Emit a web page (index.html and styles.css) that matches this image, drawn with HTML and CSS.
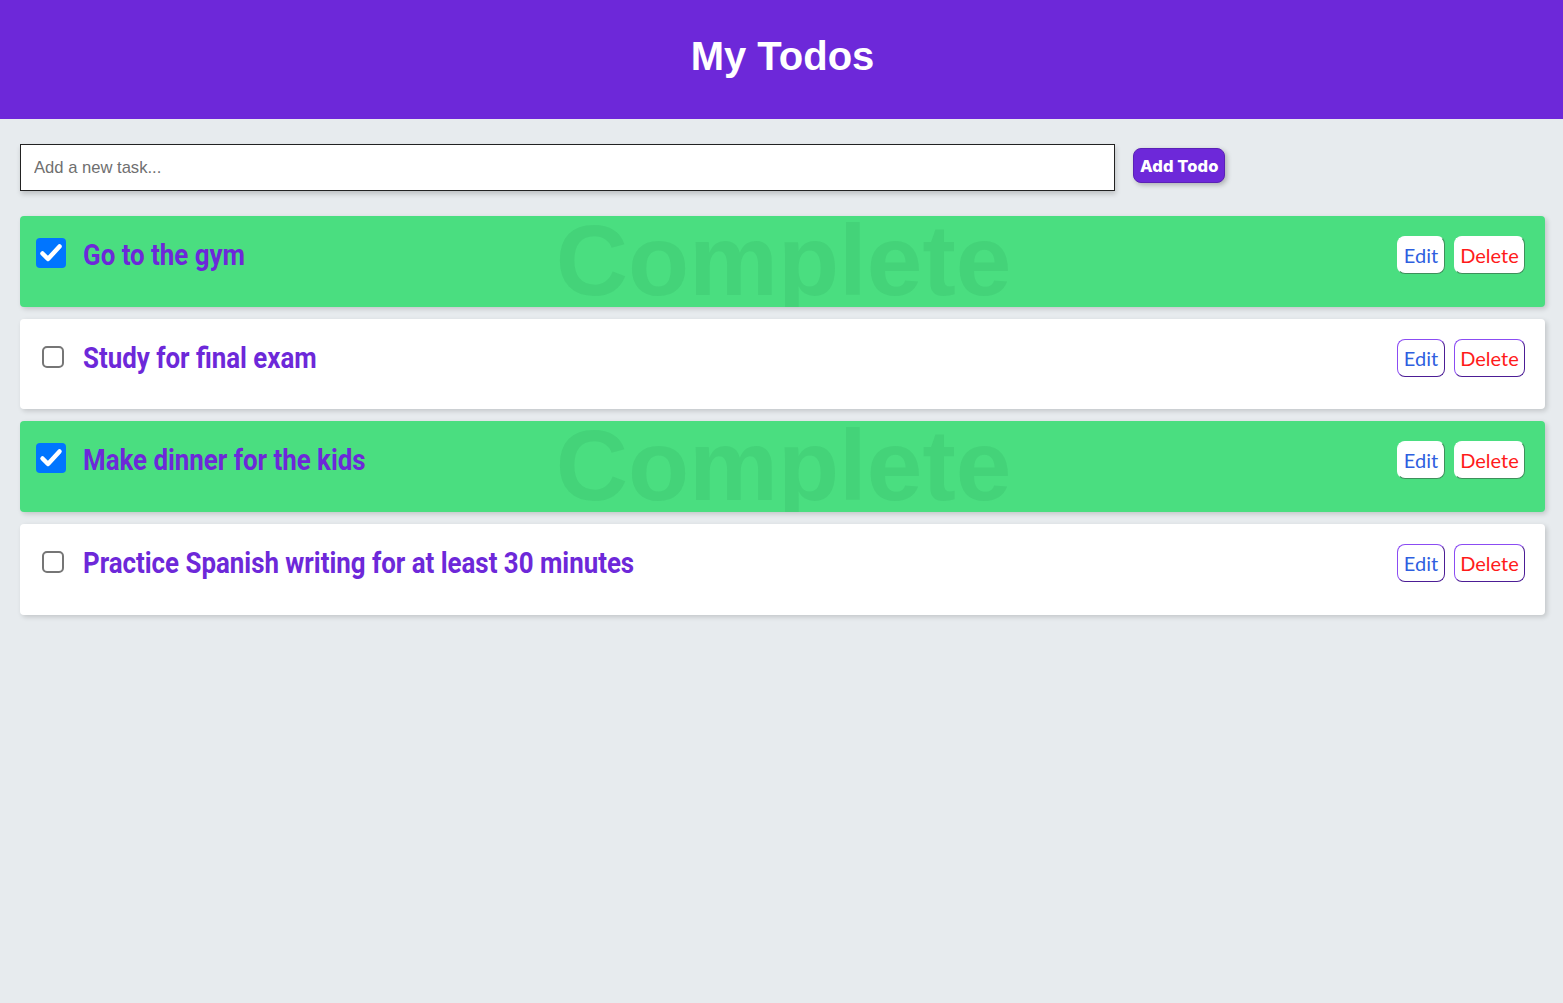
FILE: index.html
```html
<!DOCTYPE html>
<html lang="en">
<head>
<meta charset="utf-8">
<title>My Todos</title>
<link rel="stylesheet" href="styles.css">
</head>
<body>
<header class="topbar">
  <h1 class="title">My Todos</h1>
</header>
<main class="main">
  <form class="add-row">
    <input class="add-input" type="text" placeholder="Add a new task...">
    <button class="add-btn" type="button">Add Todo</button>
  </form>
  <ul class="list">
    <li class="todo done">
      <span class="watermark">Complete</span>
      <span class="check on"><svg viewBox="0 0 30 30" width="30" height="30"><path d="M6.5 15.5 L12 21 L23.5 8.5" fill="none" stroke="#fff" stroke-width="4.5" stroke-linecap="round" stroke-linejoin="round"/></svg></span>
      <span class="todo-body"><span class="todo-text">Go to the gym</span></span>
      <span class="actions"><button class="btn edit">Edit</button><button class="btn del">Delete</button></span>
    </li>
    <li class="todo">
      <span class="check off"></span>
      <span class="todo-body"><span class="todo-text">Study for final exam</span></span>
      <span class="actions"><button class="btn edit">Edit</button><button class="btn del">Delete</button></span>
    </li>
    <li class="todo done">
      <span class="watermark">Complete</span>
      <span class="check on"><svg viewBox="0 0 30 30" width="30" height="30"><path d="M6.5 15.5 L12 21 L23.5 8.5" fill="none" stroke="#fff" stroke-width="4.5" stroke-linecap="round" stroke-linejoin="round"/></svg></span>
      <span class="todo-body"><span class="todo-text">Make dinner for the kids</span></span>
      <span class="actions"><button class="btn edit">Edit</button><button class="btn del">Delete</button></span>
    </li>
    <li class="todo">
      <span class="check off"></span>
      <span class="todo-body"><span class="todo-text">Practice Spanish writing for at least 30 minutes</span></span>
      <span class="actions"><button class="btn edit">Edit</button><button class="btn del">Delete</button></span>
    </li>
  </ul>
</main>
</body>
</html>
```
FILE: styles.css
```css
* { box-sizing: border-box; }
html, body { margin: 0; padding: 0; }
body {
  background: #e7ebee;
  font-family: "Liberation Sans", Arial, sans-serif;
  min-height: 1003px;
}
.topbar {
  background: #6d28d9;
  height: 119px;
  display: flex;
  align-items: center;
  justify-content: center;
}
.title {
  margin: 0;
  color: #fff;
  font-family: "Liberation Sans", Arial, sans-serif;
  font-weight: 700;
  font-size: 40px;
  padding-bottom: 6px;
  padding-left: 2px;
}
.main { padding: 25px 18px 0 20px; }
.add-row {
  display: flex;
  align-items: center;
  gap: 18px;
  margin: 0 0 25px 0;
}
.add-input {
  width: 1095px;
  height: 47px;
  border: 1px solid #222;
  background: #fff;
  padding: 0 13px;
  font-family: "Liberation Sans", Arial, sans-serif;
  font-size: 16.6px;
  color: #333;
  box-shadow: 1px 3px 5px rgba(0,0,0,0.18);
  outline: none;
}
.add-input::placeholder { color: #6f6f6f; }
.add-btn {
  height: 35px;
  margin-top: -4px;
  padding: 0 6px;
  background: #6d28d9;
  color: #fff;
  border: 1px solid #5b21b6;
  border-radius: 8px;
  font-family: Inter, sans-serif;
  font-weight: 800;
  font-size: 16.5px;
  letter-spacing: 0.1px;
  box-shadow: 2px 2px 5px rgba(0,0,0,0.25);
}
.list {
  list-style: none;
  margin: 0;
  padding: 0;
  display: flex;
  flex-direction: column;
  gap: 12px;
  width: 1525px;
}
.todo {
  position: relative;
  overflow: hidden;
  height: 90.7px;
  background: #fff;
  border-radius: 4px;
  box-shadow: 2px 2px 5px rgba(0,0,0,0.16);
  display: flex;
  align-items: flex-start;
  padding: 20px 20px 0 16px;
}
.todo.done { background: #4ade80; }
.watermark {
  position: absolute;
  left: 0;
  right: 0;
  top: -13px;
  text-align: center;
  font-family: "Liberation Sans", Arial, sans-serif;
  font-weight: 700;
  font-size: 100px;
  color: rgba(20, 120, 60, 0.1);
  pointer-events: none;
  line-height: 1.15;
  padding-left: 2px;
}
.check {
  position: relative;
  flex: none;
  display: flex;
  align-items: center;
  justify-content: center;
}
.check.on {
  width: 30px;
  height: 30px;
  margin-top: 2px;
  background: #0075ff;
  border-radius: 4px;
}
.check.off {
  width: 22px;
  height: 22px;
  margin: 7px 2px 0 6px;
  background: #fff;
  border: 2px solid #767676;
  border-radius: 5px;
}
.todo-body {
  position: relative;
  flex: 1;
  margin-left: 17px;
  margin-top: 2px;
  min-width: 0;
}
.todo-text {
  display: inline-block;
  white-space: nowrap;
  font-family: Roboto, "Liberation Sans", sans-serif;
  font-weight: 700;
  font-size: 30px;
  line-height: 34px;
  color: #6d28d9;
  transform: scaleX(0.862);
  transform-origin: left center;
}
.actions {
  position: relative;
  display: flex;
  gap: 9px;
}
.btn {
  height: 38px;
  padding: 0;
  background: #fff;
  border-radius: 8px;
  font-family: Lato, "Noto Sans", sans-serif;
  font-size: 20px;
  border: 1px solid;
  border-color: #8b4cf3 #4c1d95 #4c1d95 #8b4cf3;
}
.done .btn {
  border-color: #fff #3f8f5b #3f8f5b #fff;
}
.btn.edit { color: #2f5fe0; width: 48px; }
.btn.del { color: #ff1a1a; width: 71px; }
```
